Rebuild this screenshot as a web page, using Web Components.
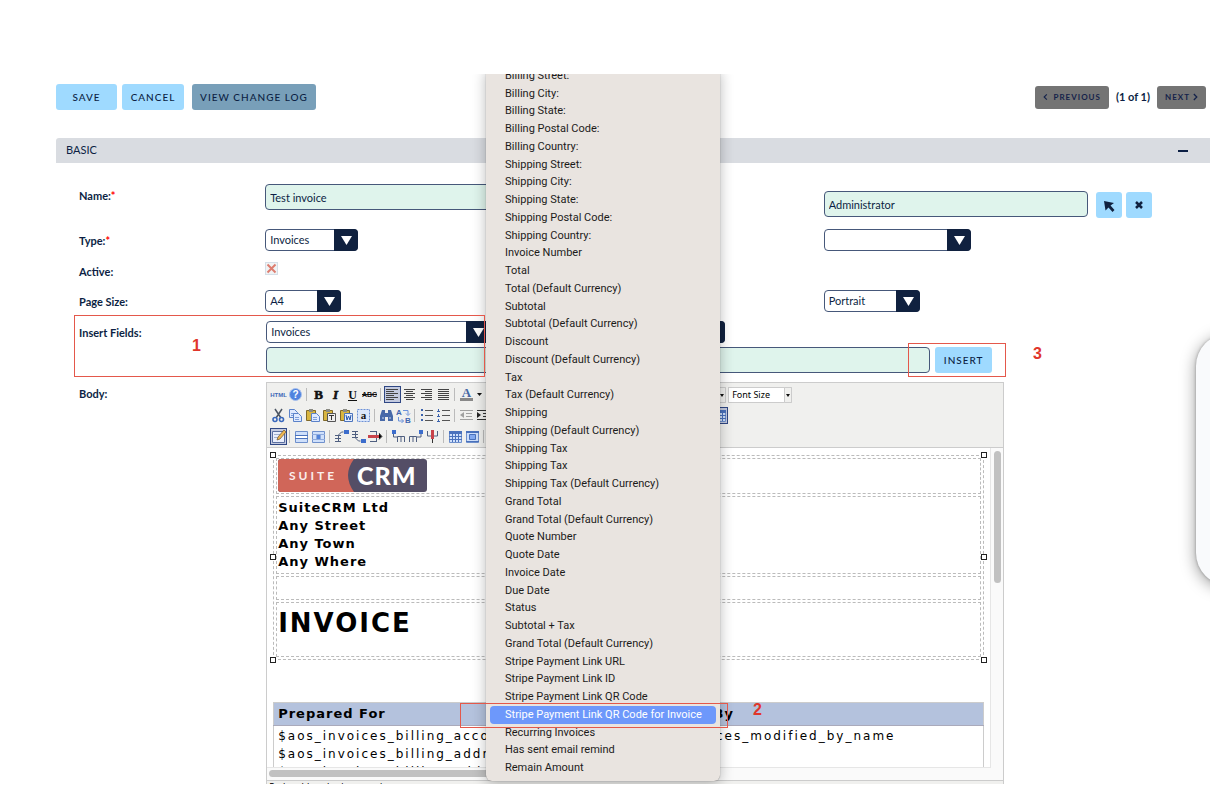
<!DOCTYPE html>
<html lang="en">
<head>
<meta charset="utf-8">
<title>Edit PDF Template</title>
<style>
html, body { margin: 0; padding: 0; background: #fff; overflow: hidden; }
body { font: 11px/24px Lato, sans-serif; color: #0c1f44; }
</style>
</head>
<body>
<crm-stage>
  <crm-actions></crm-actions>
  <crm-panel heading="BASIC">
    <crm-field label="Name:" required tall><crm-input value="Test invoice" label="Name"></crm-input></crm-field>
    <crm-field tall low><crm-relate value="Administrator"></crm-relate></crm-field>
    <crm-field label="Type:" required><crm-select style="--w:93px" label="Type" value="Invoices"></crm-select></crm-field>
    <crm-field><crm-select style="--w:147px" label="Category" value=""></crm-select></crm-field>
    <crm-field label="Active:" wide mid><crm-broken-check></crm-broken-check></crm-field>
    <crm-field label="Page Size:"><crm-select style="--w:76px" label="Page Size" value="A4"></crm-select></crm-field>
    <crm-field><crm-select style="--w:96px" label="Orientation" value="Portrait"></crm-select></crm-field>
    <crm-field label="Insert Fields:" wide><crm-insert-fields></crm-insert-fields></crm-field>
    <crm-field label="Body:" wide><rich-editor></rich-editor></crm-field>
  </crm-panel>
  <field-menu slot="over"></field-menu>
  <side-card slot="over"></side-card>
  <step-mark slot="over" style="left:74px;top:241px;width:409px;height:60px;--nx:117px;--ny:18px">1</step-mark>
  <step-mark slot="over" style="left:460px;top:629px;width:266px;height:23px;--nx:292px;--ny:-6px">2</step-mark>
  <step-mark slot="over" style="left:908px;top:269px;width:96px;height:32px;--nx:124px;--ny:-2px">3</step-mark>
</crm-stage>

<script>
const root = (el, html) => { el.attachShadow({ mode: 'open' }).innerHTML = html; return el.shadowRoot; };
const make = (name, render) => customElements.define(name, class extends HTMLElement {
  constructor() { super(); }
  connectedCallback() { if (!this.shadowRoot) root(this, render(this)); }
});
const at = (el, n) => el.getAttribute(n) || '';

make('crm-stage', () => `
<style>
:host { display: block; position: relative; margin: 74px 0 12px; height: calc(100vh - 86px); overflow: hidden; }
</style><slot></slot><slot name="over"></slot>`);

make('crm-button', el => `
<style>
:host { display: inline-block; flex: none; }
button { display: flex; align-items: center; justify-content: center; gap: 6px; width: 100%; height: 26px; padding: 0 8px; border: 0; border-radius: 3px;
  background: #9fdaff; color: #0c1f44; font: 500 10px/24px Lato, sans-serif; letter-spacing: 1px; white-space: nowrap; }
:host([tone=muted]) button { background: #789fb9; }
:host([tone=grey]) button { height: 23px; background: #747474; color: #14224a; font-size: 8px; font-weight: 700; }
:host([icon]) button { width: 26px; padding: 0; }
</style><button type="button" aria-label="${at(el, 'label') || el.textContent.trim()}"><slot></slot></button>`);

make('crm-actions', () => `
<style>
:host { display: flex; align-items: center; padding: 10px 4px 0 56px; height: 26px; }
.left { display: flex; gap: 5px; }
.left crm-button:last-child { margin-left: 3px; }
.right { margin-left: auto; display: flex; align-items: center; gap: 7px; font-weight: 700; }
.save { width: 61px; } .cancel { width: 62px; } .log { width: 124px; } .prev { width: 74px; } .next { width: 49px; }
svg { fill: none; stroke: #14224a; stroke-width: 1.5; }
.next svg { margin-left: -3px; }
</style>
<div class="left"><crm-button class="save">SAVE</crm-button><crm-button class="cancel">CANCEL</crm-button><crm-button class="log" tone="muted">VIEW CHANGE LOG</crm-button></div>
<div class="right"><crm-button class="prev" tone="grey"><svg width="6" height="8" viewBox="0 0 6 8"><path d="M5 .500 1.500 4 5 7.500"/></svg> PREVIOUS</crm-button>
<span>(1 of 1)</span>
<crm-button class="next" tone="grey">NEXT <svg width="6" height="8" viewBox="0 0 6 8"><path d="M1 .500 4.500 4 1 7.500"/></svg></crm-button></div>`);

make('crm-panel', el => `
<style>
:host { display: block; margin: 28px 0 0 56px; }
header { display: flex; align-items: center; justify-content: space-between; height: 25px; padding: 0 22px 0 10px; background: #d9dce1; border-radius: 3px 0 0 0; }
h2 { margin: 0; font: 11px/22px Lato, sans-serif; height: 24px; }
.min { width: 10px; height: 2px; padding: 0; border: 0; background: #0c1f44; }
form { display: grid; grid-template-columns: minmax(0, 1fr) minmax(0, 1fr); gap: 9px 0; padding: 21px 14px 0 23px; }
</style>
<header><h2>${at(el, 'heading')}</h2><button class="min" aria-label="Collapse"></button></header>
<form><slot></slot></form>`);

make('crm-field', el => `
<style>
:host { display: grid; grid-template-columns: minmax(0, 1fr) minmax(0, 2fr); min-height: 22px; align-items: start; }
:host([wide]) { grid-column: span 2; grid-template-columns: minmax(0, 1fr) minmax(0, 5fr); }
:host([tall]) { min-height: 36px; }
:host([mid]) { min-height: 21px; }
:host([low]) .val { padding-top: 7px; }
.lab { font-weight: 700; height: 20px; }
i { font-style: normal; color: #f00; }
</style><div class="lab">${at(el, 'label')}${el.hasAttribute('required') ? '<i>*</i>' : ''}</div><div class="val"><slot></slot></div>`);

make('crm-input', el => `
<style>
:host { display: block; }
input { display: block; box-sizing: border-box; width: 100%; height: 26px; padding: 0 4px; border: 1px solid #46587a; border-radius: 4px; background: #dff4ec; color: #0c1f44; font: 11px/24px Lato, sans-serif; }
</style><input type="text" aria-label="${at(el, 'label')}" value="${at(el, 'value')}">`);

make('crm-select', el => `
<style>
:host { display: block; position: relative; width: var(--w); height: 22px; }
select { display: block; appearance: none; box-sizing: border-box; width: 100%; height: 22px; padding: 0 24px 0 4px; border: 1px solid #46587a; border-radius: 4px; background: #fff; color: #0c1f44; font: 11px/20px Lato, sans-serif; }
svg { position: absolute; right: 0; top: 0; pointer-events: none; }
</style><select aria-label="${at(el, 'label')}"><option>${at(el, 'value')}</option></select>
<svg width="24" height="22"><path fill="#10213f" d="M0 0h20a4 4 0 0 1 4 4v14a4 4 0 0 1-4 4H0z"/><path fill="#fff" d="M7 7h11l-5.500 9z"/></svg>`);

make('crm-relate', el => `
<style>
:host { display: flex; align-items: center; height: 26px; }
crm-input { flex: 0 1 264px; margin-right: 8px; }
crm-button { margin: 2px 4px 0 0; }
</style>
<crm-input label="Assigned to" value="${at(el, 'value')}"></crm-input>
<crm-button icon label="Select"><svg width="12" height="14" viewBox="0 0 12 14"><path fill="#10213f" d="M1 3 11 5 7.500 7.500 11.500 12 9.500 14 5.500 9.500 2.500 12.500z"/></svg></crm-button>
<crm-button icon label="Clear"><svg width="8" height="8" viewBox="0 0 8 8"><path stroke="#10213f" stroke-width="2.500" d="M1 1 7 7M7 1 1 7"/></svg></crm-button>`);

make('crm-broken-check', () => `
<style>
:host { display: block; position: relative; width: 13px; height: 13px; margin-top: 2px; }
input { display: block; appearance: none; box-sizing: border-box; margin: 0; width: 13px; height: 13px; border: 1px solid #d5dfe8; background: #f1f3f4; }
svg { position: absolute; left: 0; top: 0; pointer-events: none; }
</style><input type="checkbox" aria-label="Active" checked>
<svg width="13" height="13"><path stroke="#dd7d70" stroke-width="2" d="M2.500 2.500 10.500 10.500M10.500 2.500 2.500 10.500"/></svg>`);

make('crm-insert-fields', () => `
<style>
:host { display: grid; gap: 4px; max-width: 726px; margin-left: 1px; }
div { display: flex; gap: 5px; }
crm-input { flex: 1; }
crm-button { width: 57px; }
</style>
<div><crm-select style="--w:224px" label="Module" value="Invoices"></crm-select><crm-select style="--w:230px" label="Field" value=""></crm-select></div>
<div><crm-input label="Variable"></crm-input><crm-button>INSERT</crm-button></div>`);

const lines = (rows, col = '#444') => rows.map((r, i) => `<path stroke="${col}" d="M${r[0]} ${3.5 + i * 2}H${r[1]}"/>`).join('');
const glyph = (t, css) => `<text x="8.500" y="13" text-anchor="middle" fill="#111" style="${css}">${t}</text>`;
const sheet = (x, y) => `<path fill="#dfeaff" stroke="#5b82c9" d="M${x}.500 ${y}.500h5l3 3v5h-8z"/><path stroke="#7fa0dc" d="M${x + 2} ${y + 4}.500h4M${x + 2} ${y + 6}.500h4"/>`;
const clip = `<path fill="#d9b640" stroke="#80692a" d="M2.500 3.500h9v10h-9z"/><path fill="#8b8b83" d="M5 2h4v3H5z"/>`;
const tbl = `<path fill="#cfe0fb" stroke="#6f90cc" d="M2.500 3.500h12v11h-12z"/>`;
const ICONS = {
  html: glyph('HTML', 'font:700 6px Liberation Sans,sans-serif;fill:#3f69b8').replace('y="13"', 'y="11"'),
  help: `<circle cx="8.500" cy="8.500" r="6" fill="#5083df" stroke="#a9c1ec"/><text x="8.500" y="12" text-anchor="middle" fill="#fff" style="font:700 10px Liberation Sans,sans-serif">?</text>`,
  b: glyph('B', 'font:900 13px Liberation Serif,serif;stroke:#111;stroke-width:.6'),
  i: glyph('I', 'font:italic 900 13px Liberation Serif,serif;stroke:#111;stroke-width:.6'),
  u: glyph('U', 'font:700 12px Liberation Serif,serif') + `<path stroke="#111" d="M4 14.500h9"/>`,
  s: glyph('ABC', 'font:700 7px Liberation Sans,sans-serif').replace('y="13"', 'y="11"') + `<path stroke="#111" d="M1 8.500h15"/>`,
  al: lines([[2, 14], [2, 10], [2, 14], [2, 10], [2, 14], [2, 10]]),
  ac: lines([[3, 14], [5, 12], [3, 14], [5, 12], [3, 14], [5, 12]]),
  ar: lines([[3, 14], [7, 14], [3, 14], [7, 14], [3, 14], [7, 14]]),
  aj: lines([[3, 14], [3, 14], [3, 14], [3, 14], [3, 14], [3, 14]]),
  color: glyph('A', 'font:700 13px Liberation Serif,serif;fill:#4467a4').replace('y="13"', 'y="11"') + `<path fill="#888" d="M2 12h13v3H2z"/>`,
  caret: `<path fill="#111" d="M2 7h5l-2.500 3z"/>`,
  cut: `<path stroke="#4b5563" stroke-width="1.500" d="M5 2 11 11M12 2 6 11"/><g fill="none" stroke="#3968bd" stroke-width="1.600"><circle cx="5" cy="12.500" r="2"/><circle cx="11.500" cy="12.500" r="2"/></g>`,
  copy: sheet(2, 2) + sheet(6, 6),
  paste: clip + sheet(7, 6),
  pasteT: clip + `<path fill="#eee" stroke="#555" d="M6.500 6.500h8v8h-8z"/><path stroke="#333" d="M8 8.500h5M10.500 8v5"/>`,
  pasteW: clip + `<path fill="#e5efff" stroke="#4c74bc" d="M6.500 6.500h8v8h-8z"/><path fill="none" stroke="#2856ab" d="m8 8 1 5 1.500-4 1.500 4 1-5"/>`,
  all: `<path fill="#dbe7fb" stroke="#6d91d6" stroke-dasharray="2 1" d="M2.500 2.500h12v12h-12z"/>` + glyph('a', 'font:700 11px Liberation Serif,serif').replace('y="13"', 'y="12"'),
  find: `<path fill="#4869a8" d="M4 3h3v3h3V3h3l2 6v5h-5v-4H7v4H2V9z"/><path stroke="#c9d8f2" d="M4 11h2M11 11h2"/>`,
  repl: `<g fill="#3f65ae" style="font:700 8px Liberation Sans,sans-serif"><text x="1" y="8">A</text><text x="10" y="16">B</text></g><path fill="none" stroke="#6b92dc" d="M8 3.500h5v4m-2-1 2 2 2-2M3.500 10v4h5m-2-2 2 2-2 2"/>`,
  ul: [3, 8, 13].map(y => `<path fill="#3b62ac" d="M3 ${y - 1}h2v2H3z"/><path stroke="#555" d="M7 ${y}.500h8"/>`).join(''),
  ol: [3, 8, 13].map(y => `<path stroke="#3b62ac" d="M3.500 ${y - 1}v3M2 ${y + 1}.500h3"/><path stroke="#555" d="M7 ${y}.500h8"/>`).join(''),
  out: `<g opacity=".5"><path stroke="#555" d="M2 3.500h13M8 6.500h6M8 9.500h6M2 12.500h13"/><path fill="#555" d="M6 5v6L2 8z"/></g>`,
  ind: `<path stroke="#333" d="M2 3.500h13M8 6.500h6M8 9.500h6M2 12.500h13"/><path fill="#222" d="M2 5v6l4-3z"/>`,
  edit: `<path fill="#e9eefc" stroke="#5b6fa0" d="M2.500 3.500h12v11h-12z"/><path stroke="#a0afce" d="M4 6.500h6M4 9.500h5"/><path fill="#efb650" stroke="#6d532c" stroke-width=".7" d="m7 12 1-3 6-7 2 2-6 7z"/>`,
  row: tbl + `<path stroke="#4a72bd" d="M2 7.500h13M2 10.500h13"/><path fill="#fff" d="M3 8h11v2H3z"/>`,
  cell: tbl + `<path stroke="#8fabdd" d="M2 6.500h13M2 11.500h13M6.500 6v6M10.500 6v6"/><path fill="#5283da" d="M7 7h3v4H7z"/>`,
  rb: `<path stroke="#4f5f80" fill="none" d="M2 7.500h6M2 10.500h6M2 13.500h6M5.500 14V7l3-3h2"/><path fill="#3c6dcc" d="M11 2h5v4h-5z"/>`,
  ra: `<path stroke="#4f5f80" fill="none" d="M2 3.500h6M2 6.500h6M2 9.500h6M5.500 3v7l3 3h2"/><path fill="#3c6dcc" d="M11 11h5v4h-5z"/>`,
  rd: `<path stroke="#4f5f80" d="M3 3.500h7M3 13.500h7M9.500 3v11"/><path stroke="#c9434a" stroke-width="3" d="M1 8.500h12"/><path stroke="#555" d="m12 5 3 3.500-3 3"/>`,
  cb: `<path fill="#3c6dcc" d="M2 2h4v4H2z"/><path stroke="#4f5f80" fill="none" d="M3.500 6v3h4M7.500 14V8.500h7V14M11 8v6"/>`,
  ca: `<path fill="#3c6dcc" d="M12 2h4v4h-4z"/><path stroke="#4f5f80" fill="none" d="M14 6v3h-4M2.500 14V8.500h7V14M6 8v6"/>`,
  cd: `<path stroke="#4f5f80" fill="none" d="M3.500 3v5h10V3"/><path stroke="#c9434a" stroke-width="3" d="M8.500 2v9"/><path stroke="#333" d="M8.500 11v4"/>`,
  split: tbl + `<path fill="#4a72bd" d="M2 3h13v3H2z"/><path stroke="#4a72bd" d="M2 8.500h13M2 11.500h13M5.500 6v8M8.500 6v8M11.500 6v8"/>`,
  merge: tbl + `<path fill="#4a72bd" d="M2 3h13v2H2z"/><path fill="#84aaf0" stroke="#4a72bd" d="M5.500 6.500h6v5h-6z"/><path stroke="#4a72bd" d="M2 13.500h13"/>`,
};
make('tool-bar-row', el => `
<style>
:host { display: flex; align-items: center; height: 21px; }
button { flex: none; display: block; box-sizing: border-box; width: 17px; height: 17px; padding: 0; border: 0; background: none; }
button svg { display: block; width: 17px; height: 17px; }
button.on { outline: 1px solid #2f4784; outline-offset: -1px; background: #c3cadf; }
button.slim { width: 9px; overflow: hidden; }
i { flex: none; width: 1px; height: 13px; margin: 0 3px 0 2px; background: #bbb; }
</style>${at(el, 'tools').split(' ').map(t => t === '|' ? '<i></i>' : (([n, on]) => `<button type="button" aria-label="${n}" class="${on === undefined ? '' : 'on'} ${n === 'caret' ? 'slim' : ''}"><svg viewBox="0 0 17 17">${ICONS[n]}</svg></button>`)(t.split('*'))).join('')}<slot></slot>`);

make('tool-select', el => `
<style>
:host { display: block; flex: none; position: relative; height: 16px; width: var(--w); margin-left: var(--gap); }
select { display: block; appearance: none; box-sizing: border-box; width: 100%; height: 16px; padding: 0 8px 0 3px; border: 1px solid #ccc; border-radius: 0; background: #fff; color: #000; font: 9px/14px "Noto Sans", sans-serif; }
svg { position: absolute; right: 0; top: 0; pointer-events: none; }
</style><select aria-label="${at(el, 'value')}"><option>${at(el, 'value')}</option></select>
<svg width="8" height="16"><path fill="#f0f0ee" stroke="#ccc" d="M.500.500h7v15h-7z"/><path fill="#111" d="M2 7h4l-2 3z"/></svg>`);

make('suite-logo', () => `
<style>:host { display: block; height: 33px; } svg { display: block; }</style>
<svg width="149" height="33" viewBox="0 0 149 33" role="img" aria-label="SuiteCRM">
<rect width="149" height="33" rx="3" fill="#544e66"/><path fill="#d06659" d="M3 0h73q-12 16 0 33H3a3 3 0 0 1-3-3V3a3 3 0 0 1 3-3z"/>
<text x="11" y="21" fill="#fbeeec" style="font:700 12px Lato,sans-serif;letter-spacing:3px">SUITE</text>
<text x="79" y="26" fill="#fff" style="font:900 25px Lato,sans-serif">CRM</text></svg>`);

make('invoice-template', () => `
<style>
:host { display: block; padding: 7px 6px 0; color: #000; font: 12px/18px "DejaVu Sans", Verdana, sans-serif; letter-spacing: 1px; }
.sel { position: relative; }
table { width: 100%; }
td, th { text-align: left; vertical-align: top; padding: 0; }
.head { box-sizing: border-box; border: 1px dashed #bbb; border-spacing: 2px; }
.head td { box-sizing: border-box; border: 1px dashed #bbb; padding: 0 1px; }
.logo { height: 36px; } .addr { height: 78px; } .gap { height: 24px; } .title { height: 55px; }
.head .addr { padding-top: 2px; font-size: 13px; font-weight: 700; }
h1 { margin: 4px 0 0; font: 700 26px/32px "DejaVu Sans", Verdana, sans-serif; letter-spacing: 2px; }
b { position: absolute; box-sizing: border-box; width: 6px; height: 6px; border: 1px solid #222; background: #fff; }
.l { left: -3px; } .r { right: -3px; } .t { top: -3px; } .m { top: 99px; } .bt { bottom: -3px; }
.items { margin-top: 42px; table-layout: fixed; border-collapse: collapse; border: 1px solid #ccc; white-space: nowrap; }
th { padding: 2px 4px; height: 18px; background: #b4c2dd; font-size: 13px; border-bottom: 1px solid #aab; }
.items td { padding: 1px 4px; letter-spacing: 2px; }
</style>
<div class="sel"><table class="head">
<tr><td class="logo"><suite-logo></suite-logo></td></tr>
<tr><td class="addr">SuiteCRM Ltd<br>Any Street<br>Any Town<br>Any Where</td></tr>
<tr><td class="gap"></td></tr>
<tr><td class="title"><h1>INVOICE</h1></td></tr></table>
<b class="l t"></b><b class="r t"></b><b class="l m"></b><b class="r m"></b><b class="l bt"></b><b class="r bt"></b></div>
<table class="items"><tr><th>Prepared For</th><th>Prepared By</th></tr>
<tr><td>$aos_invoices_billing_account<br>$aos_invoices_billing_address<br>$aos_invoices_billing_address</td><td>$aos_invoices_modified_by_name</td></tr></table>`);

make('rich-editor', () => `
<style>
:host { display: block; box-sizing: border-box; max-width: 738px; margin-left: 1px; border: 1px solid #ccc; background: #f0f0ee; }
.tools { padding: 1px 2px 0 3px; height: 63px; border-bottom: 1px solid #ccc; }
.view { display: grid; grid-template-columns: minmax(0, 1fr) 12px; grid-template-rows: 320px 12px; background: #fafafa; border-bottom: 1px solid #ccc; }
.page { overflow: hidden; background: #fff; border: solid #e6e6e6; border-width: 0 1px 1px 0; }
.v, .h { display: flex; }
.v::before { content: ""; width: 7px; height: 132px; margin: 3px 0 0 3px; border-radius: 4px; background: #c1c1c1; }
.h::before { content: ""; width: 50%; height: 7px; margin: 2px 0 0 2px; border-radius: 4px; background: #c1c1c1; }
footer { height: 20px; padding: 0 2px; color: #000; font: 9px/12px "Noto Sans", sans-serif; }
</style>
<div class="tools">
<tool-bar-row tools="html help | b i u s | al*1 ac ar aj | color caret |"><tool-select style="--w:110px;--gap:126px" value="Font Family"></tool-select><tool-select style="--w:64px;--gap:2px" value="Font Size"></tool-select></tool-bar-row>
<tool-bar-row tools="cut copy paste pasteT pasteW all | find repl | ul ol | out ind"><tool-bar-row style="margin-left:219px" tools="split*1"></tool-bar-row></tool-bar-row>
<tool-bar-row tools="edit*1 | row cell | rb ra rd | cb ca cd | split merge |"></tool-bar-row>
</div>
<div class="view"><div class="page"><invoice-template></invoice-template></div><div class="v"></div><div class="h"></div></div>
<footer>Path: table » tbody » tr » td</footer>`);

const FIELDS = ['Billing Street:', 'Billing City:', 'Billing State:', 'Billing Postal Code:', 'Billing Country:', 'Shipping Street:', 'Shipping City:', 'Shipping State:', 'Shipping Postal Code:', 'Shipping Country:', 'Invoice Number', 'Total', 'Total (Default Currency)', 'Subtotal', 'Subtotal (Default Currency)', 'Discount', 'Discount (Default Currency)', 'Tax', 'Tax (Default Currency)', 'Shipping', 'Shipping (Default Currency)', 'Shipping Tax', 'Shipping Tax', 'Shipping Tax (Default Currency)', 'Grand Total', 'Grand Total (Default Currency)', 'Quote Number', 'Quote Date', 'Invoice Date', 'Due Date', 'Status', 'Subtotal + Tax', 'Grand Total (Default Currency)', 'Stripe Payment Link URL', 'Stripe Payment Link ID', 'Stripe Payment Link QR Code', 'Stripe Payment Link QR Code for Invoice', 'Recurring Invoices', 'Has sent email remind', 'Remain Amount'];
make('field-menu', () => `
<style>
:host { position: absolute; left: 486px; top: -7px; bottom: 3px; width: 234px; box-sizing: border-box; padding: 0 4px 4px; background: #e9e4e0; border-radius: 6px; box-shadow: 0 0 1px rgba(0,0,0,.5), 0 3px 14px rgba(0,0,0,.28); color: #1c1b1a; }
ul { display: grid; grid-auto-rows: minmax(0, 1fr); height: 100%; margin: 0; padding: 0; list-style: none; }
li { display: flex; align-items: center; padding-left: 15px; border-radius: 4px; font: 11px/16px Roboto, Inter, sans-serif; white-space: nowrap; }
li[aria-selected=true] { background: #6d98fb; color: #fff; }
</style><ul role="listbox" aria-label="Field">${FIELDS.map((f, i) => `<li role="option" aria-selected="${i === 36}">${f}</li>`).join('')}</ul>`);

make('side-card', () => `
<style>:host { position: absolute; right: -66px; top: 260px; width: 80px; height: 251px; border-radius: 32px; background: #f9fafc; box-shadow: 0 3px 16px rgba(0,0,0,.4), 0 0 3px rgba(0,0,0,.3); }</style>`);

make('step-mark', () => `
<style>
:host { position: absolute; border: 1px solid #e4584b; pointer-events: none; }
span { position: absolute; left: var(--nx); top: var(--ny); font: 700 16px/24px "Liberation Sans", sans-serif; color: #e0352b; }
</style><span><slot></slot></span>`);
</script>
</body>
</html>
